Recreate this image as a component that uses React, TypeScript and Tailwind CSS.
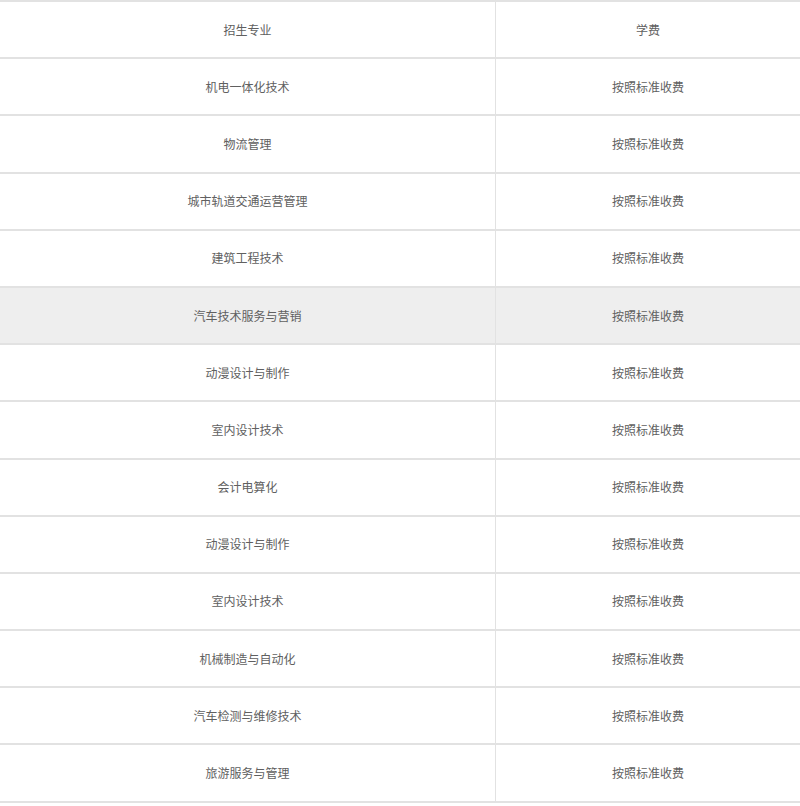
import React from 'react';

const majors = [
  '机电一体化技术',
  '物流管理',
  '城市轨道交通运营管理',
  '建筑工程技术',
  '汽车技术服务与营销',
  '动漫设计与制作',
  '室内设计技术',
  '会计电算化',
  '动漫设计与制作',
  '室内设计技术',
  '机械制造与自动化',
  '汽车检测与维修技术',
  '旅游服务与管理',
];

export default function App() {
  return (
    <div className="w-[800px] h-[806px] overflow-hidden bg-white font-['Microsoft_YaHei','Noto_Sans_CJK_SC',sans-serif]">
      <table className="w-[802px] -ml-[1px] border-collapse text-[12px] text-[#606060]">
        <tbody>
          {/* 表头 */}
          <tr className="h-[57.2px]">
            <td className="w-[496px] border-y-2 border-x border-[#e2e2e2] text-center">招生专业</td>
            <td className="border-y-2 border-x border-[#e2e2e2] text-center">学费</td>
          </tr>
          {majors.map((m, i) => (
            <tr key={i} className={`h-[57.2px] ${i === 4 ? 'bg-[#eeeeee]' : ''}`}>
              <td className="border-y-2 border-x border-[#e2e2e2] text-center">{m}</td>
              <td className="border-y-2 border-x border-[#e2e2e2] text-center">按照标准收费</td>
            </tr>
          ))}
        </tbody>
      </table>
    </div>
  );
}
